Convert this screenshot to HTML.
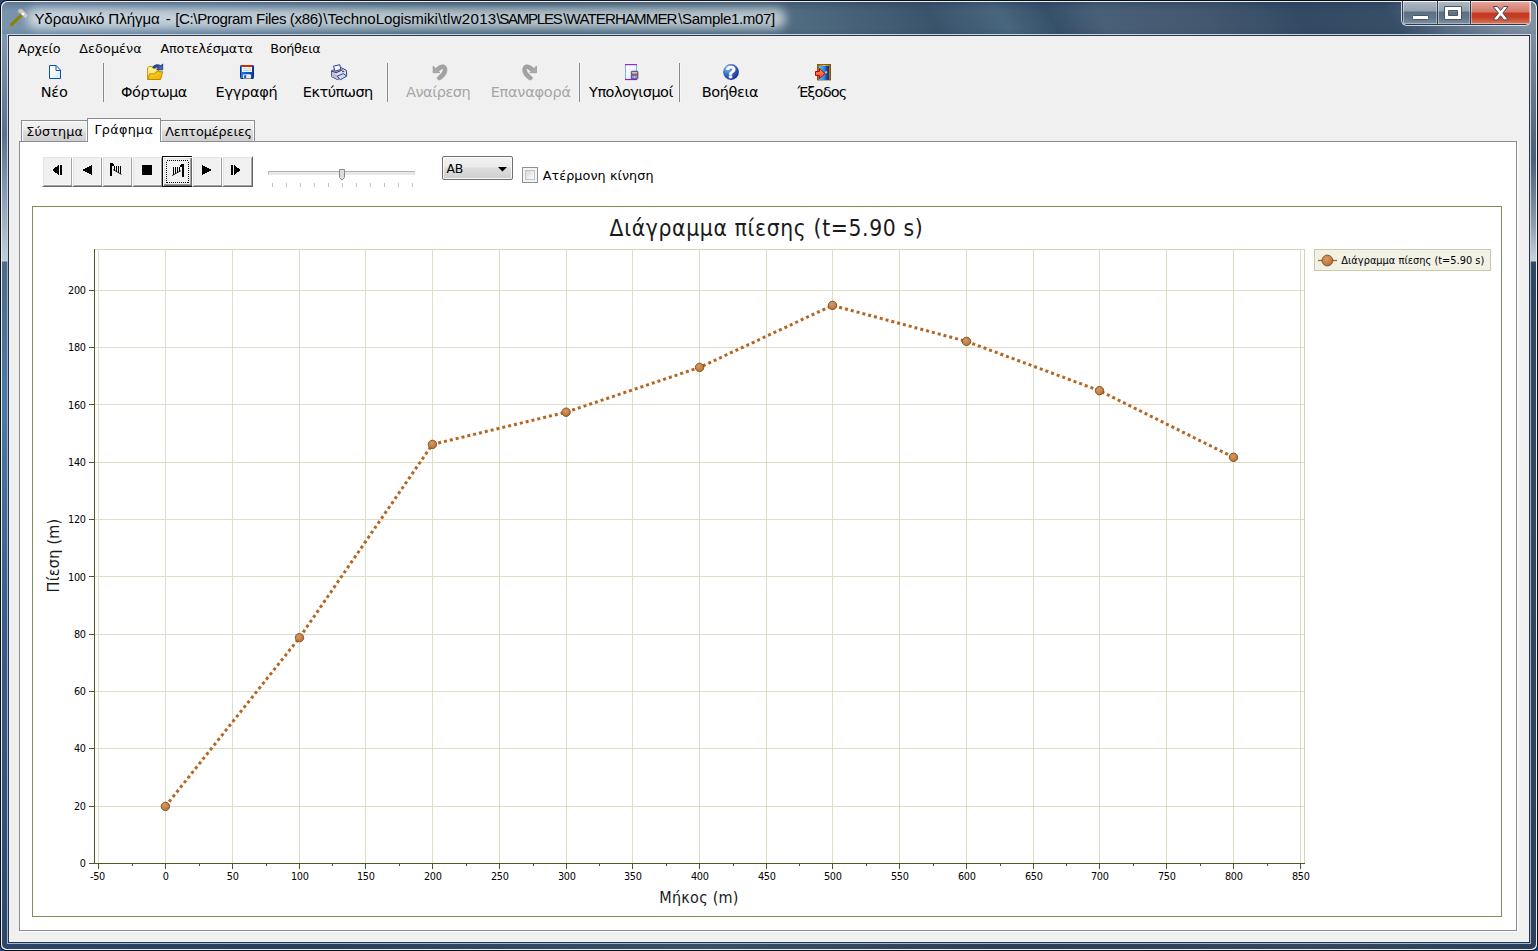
<!DOCTYPE html><html lang="el"><head><meta charset="utf-8"><title>Υδραυλικό Πλήγμα</title><style>
*{margin:0;padding:0;box-sizing:border-box}
html,body{width:1538px;height:951px;overflow:hidden}
body{position:relative;background:#1d4c80;font-family:"DejaVu Sans","Liberation Sans",sans-serif;color:#000}
.a{position:absolute}
.t{position:absolute;white-space:pre;line-height:normal}
#win{left:0;top:0;width:1538px;height:951px;border-radius:7px 7px 6px 6px;background:#0b0f14;overflow:hidden}
#winhi{left:1px;top:1px;width:1536px;height:949px;border-radius:6px 6px 5px 5px;background:#e9eef3;overflow:hidden}
#glassT{left:1px;top:1px;width:1534px;height:34px;border-radius:6px 6px 0 0;
 background:linear-gradient(60deg,#7a94ad 8.5px,#6f8ca6 95.1px,#5c7c96 225.0px,#486a80 354.9px,#44667b 484.8px,#4b6a80 614.7px,#4f6b80 701.3px,#3a546c 813.9px,#48667e 874.5px,#36506a 917.8px,#4a6078 961.1px,#44586f 1047.7px,#344a64 1134.3px,#384e67 1212.2px,#5a6e84 1255.5px,#76889b 1298.8px,#8494a5 1336.9px)}
#glassTs{left:1px;top:1px;width:1534px;height:34px;border-radius:6px 6px 0 0;background:linear-gradient(to bottom,rgba(20,40,70,.28) 0,rgba(20,40,70,.12) 4px,rgba(0,0,0,0) 9px,rgba(0,0,0,0) 26px,rgba(20,40,70,.10) 33px)}
#glassL{left:1px;top:33px;width:6px;height:915px;border-radius:0 0 0 5px;
 background:linear-gradient(to bottom,#8199b0 0,#56728e 100px,#8fa5b8 170px,#c3cfd9 227px,#4c6c8c 228px,#4a7aa5 370px,#3a5f8a 570px,#2c4a72 880px,#2c4468 915px)}
#glassR{left:1529px;top:33px;width:6px;height:915px;border-radius:0 0 5px 0;
 background:linear-gradient(to bottom,#7d8fa0 0,#4a5f78 125px,#8b9cad 190px,#c8d4de 227px,#2f4863 228px,#34495f 500px,#2b405c 915px)}
#glassB{left:6px;top:943px;width:1524px;height:5px;background:linear-gradient(to right,#2c4468 0,#2a3f5a 300px,#3a4f68 700px,#2b3f58 1000px,#33485f 1300px,#2b405c 1524px)}
#glow{left:27px;top:8px;width:759px;height:21px;border-radius:10px;background:rgba(255,255,255,.62);filter:blur(5px)}
#title{left:33.7px;top:10.5px;font-family:"Liberation Sans","DejaVu Sans",sans-serif;font-size:14.57px;color:#000}
#inL{left:7px;top:34px;width:1524px;height:910px;background:linear-gradient(to bottom,#ccd6e0 0,#c4d0dc 227px,#9fb3c8 228px,#a0b4cc 100%)}
#inD{left:8px;top:35px;width:1522px;height:908px;background:#25364a}
#client{left:9px;top:36px;width:1520px;height:906px;background:#f0f0f0;overflow:hidden}
/* caption buttons */
#cap{left:1401px;top:1px;width:130px;height:25px;border-radius:0 0 6px 6px;background:rgba(255,255,255,.75)}
#capd{left:1px;top:0;width:128px;height:24px;border-radius:0 0 5px 5px;background:#2b3a4c;overflow:hidden}
.cb{position:absolute;top:0;height:23px}
.cbg{background:linear-gradient(to bottom,#c3ccd5 0,#a9b5c1 2px,#93a1af 10px,#5d6f82 11px,#62758a 17px,#7f91a4 23px);box-shadow:inset 1px 0 0 rgba(255,255,255,.45),inset -1px 0 0 rgba(255,255,255,.35),inset 0 1px 0 rgba(255,255,255,.8),inset 0 -1px 0 rgba(255,255,255,.35)}
.cbr{background:linear-gradient(to bottom,#eab4a9 0,#e2a094 2px,#d4766a 11px,#c63a21 12px,#c53c22 16px,#cf6a4c 21px,#d58a6e 23px);box-shadow:inset 1px 0 0 rgba(255,255,255,.4),inset -1px 0 0 rgba(255,255,255,.4),inset 0 1px 0 rgba(255,255,255,.85),inset 0 -1px 0 rgba(255,255,255,.35)}
/* menu/toolbar */
.dis{color:#a5a5a5}
.sep{position:absolute;top:27px;width:1px;height:39px;background:#868686;box-shadow:-1px 0 0 #f7f7f7,1px 0 0 #f7f7f7}
/* tabs */
.tab{position:absolute;border:1px solid #898c95;border-bottom:none;background:linear-gradient(to bottom,#f2f2f2 0,#ebebeb 9px,#dddddd 10px,#cfcfcf 100%);box-shadow:inset 1px 1px 0 #fcfcfc,inset -1px 0 0 #fcfcfc}
.tabs{position:absolute;border:1px solid #898c95;border-bottom:none;background:#fff}
#tabpage{left:10px;top:105px;width:1498px;height:790px;border:1px solid #898c95;background:#fff;box-shadow:1px 1px 0 #fdfdfd,2px 1px 0 #f7f7f7}
/* buttons */
.btn{position:absolute;top:120px;width:31px;height:31px;background:#f0f0f0;border:1px solid;border-color:#fff #696969 #696969 #fff;box-shadow:inset 1px 1px 0 #e3e3e3,inset -1px -1px 0 #a0a0a0,inset -2px -2px 0 #f8f8f8}
.btnf{position:absolute;top:120px;width:31px;height:31px;background:#f0f0f0;border:1px solid #100808;box-shadow:inset 1px 1px 0 #fff,inset -1px -1px 0 #696969,inset -2px -2px 0 #a0a0a0,inset 2px 2px 0 #e3e3e3}
.btn svg,.btnf svg{position:absolute;left:-1px;top:-1px}
</style></head><body>
<div id="win" class="a"><div id="winhi" class="a">
<div id="glassT" class="a"></div><div id="glassTs" class="a"></div><div id="glassL" class="a"></div><div id="glassR" class="a"></div><div id="glassB" class="a"></div>
</div>
<div id="glow" class="a"></div>
<svg class="a" style="left:6px;top:6px" width="26" height="24" viewBox="6 6 26 24"><path d="M10.5 25.5 L21.5 15.2" stroke="#8a8400" stroke-width="3.1" stroke-linecap="butt"/><path d="M18 10.2 C19.5 8.6 21.6 8.6 23 10 L28.6 15.6 L25.6 18.7 L21.4 14.6 C20.6 13.6 19.4 12.6 18.2 12.4 Z" fill="#c9c9c9" stroke="#a4a4a4" stroke-width=".9"/><circle cx="23" cy="14" r="1.3" fill="#fff"/></svg>
<span class="t " style="left:34.40px;top:9.78px;font-size:15.1px;font-family:'Liberation Sans','DejaVu Sans',sans-serif;letter-spacing:-0.091px;">Υδραυλικό Πλήγμα</span>
<span class="t " style="left:165.80px;top:9.78px;font-size:15.1px;font-family:'Liberation Sans','DejaVu Sans',sans-serif;letter-spacing:0.000px;">-</span>
<span class="t " style="left:175.20px;top:9.78px;font-size:15.1px;font-family:'Liberation Sans','DejaVu Sans',sans-serif;letter-spacing:-0.385px;">[C:\Program Files (x86)</span>
<span class="t " style="left:323.30px;top:9.78px;font-size:15.1px;font-family:'Liberation Sans','DejaVu Sans',sans-serif;letter-spacing:-0.075px;">\TechnoLogismiki</span>
<span class="t " style="left:438.20px;top:9.78px;font-size:15.1px;font-family:'Liberation Sans','DejaVu Sans',sans-serif;letter-spacing:0.254px;">\tlw2013</span>
<span class="t " style="left:496.40px;top:9.78px;font-size:15.1px;font-family:'Liberation Sans','DejaVu Sans',sans-serif;letter-spacing:-1.304px;">\SAMPLES</span>
<span class="t " style="left:563.30px;top:9.78px;font-size:15.1px;font-family:'Liberation Sans','DejaVu Sans',sans-serif;letter-spacing:-0.900px;">\WATERHAMMER</span>
<span class="t " style="left:678.20px;top:9.78px;font-size:15.1px;font-family:'Liberation Sans','DejaVu Sans',sans-serif;letter-spacing:-0.368px;">\Sample1.m07]</span>
<div id="cap" class="a"><div id="capd" class="a">
<div class="cb cbg" style="left:1px;width:34px"></div><div class="cb cbg" style="left:36px;width:32px"></div><div class="cb cbr" style="left:69px;width:59px"></div>
</div></div>
<svg class="a" style="left:1401px;top:0" width="130" height="26" viewBox="1401 0 130 26"><rect x="1412.5" y="15.5" width="16" height="4" rx=".8" fill="#fff" stroke="#4a5566" stroke-width="1"/><path d="M1444.5 6.5h17v13h-17z M1448.5 10.5v5h9v-5z" fill="#fff" fill-rule="evenodd" stroke="#4a5566" stroke-width="1"/><path d="M1493.2 6.5h4.3l3.1 4 3.1-4h4.3l-5.2 6.6 5.4 6.8h-4.4l-3.2-4.2-3.2 4.2h-4.4l5.4-6.8z" fill="#fff" stroke="#4a4a5a" stroke-width="1" stroke-linejoin="round"/></svg>
<div id="inL" class="a"></div><div id="inD" class="a"></div>
<div id="client" class="a">
<span class="t " style="left:9.10px;top:5.17px;font-size:12.75px;font-family:'DejaVu Sans','Liberation Sans',sans-serif;letter-spacing:-0.157px;">Αρχείο</span>
<span class="t " style="left:70.30px;top:5.17px;font-size:12.75px;font-family:'DejaVu Sans','Liberation Sans',sans-serif;letter-spacing:0.094px;">Δεδομένα</span>
<span class="t " style="left:151.40px;top:5.17px;font-size:12.75px;font-family:'DejaVu Sans','Liberation Sans',sans-serif;letter-spacing:-0.116px;">Αποτελέσματα</span>
<span class="t " style="left:261.20px;top:5.17px;font-size:12.75px;font-family:'DejaVu Sans','Liberation Sans',sans-serif;letter-spacing:-0.273px;">Βοήθεια</span>
<div class="sep" style="left:94px"></div>
<div class="sep" style="left:378px"></div>
<div class="sep" style="left:570px"></div>
<div class="sep" style="left:670px"></div>
<span class="t " style="left:31.70px;top:48.14px;font-size:14.5px;font-family:'DejaVu Sans','Liberation Sans',sans-serif;letter-spacing:-0.242px;">Νέο</span>
<span class="t " style="left:112.10px;top:48.14px;font-size:14.5px;font-family:'DejaVu Sans','Liberation Sans',sans-serif;letter-spacing:-0.481px;">Φόρτωμα</span>
<span class="t " style="left:206.60px;top:48.14px;font-size:14.5px;font-family:'DejaVu Sans','Liberation Sans',sans-serif;letter-spacing:-0.292px;">Εγγραφή</span>
<span class="t " style="left:293.80px;top:48.14px;font-size:14.5px;font-family:'DejaVu Sans','Liberation Sans',sans-serif;letter-spacing:-0.513px;">Εκτύπωση</span>
<span class="t dis" style="left:397.00px;top:48.14px;font-size:14.5px;font-family:'DejaVu Sans','Liberation Sans',sans-serif;letter-spacing:-0.459px;">Αναίρεση</span>
<span class="t dis" style="left:481.70px;top:48.14px;font-size:14.5px;font-family:'DejaVu Sans','Liberation Sans',sans-serif;letter-spacing:-0.256px;">Επαναφορά</span>
<span class="t " style="left:580.10px;top:48.14px;font-size:14.5px;font-family:'DejaVu Sans','Liberation Sans',sans-serif;letter-spacing:-0.538px;">Υπολογισμοί</span>
<span class="t " style="left:692.80px;top:48.14px;font-size:14.5px;font-family:'DejaVu Sans','Liberation Sans',sans-serif;letter-spacing:-0.404px;">Βοήθεια</span>
<span class="t " style="left:788.40px;top:48.14px;font-size:14.5px;font-family:'DejaVu Sans','Liberation Sans',sans-serif;letter-spacing:-0.844px;">Έξοδος</span>
<svg class="a" style="left:0;top:24px" width="900" height="26" viewBox="9 60 900 26"><defs><linearGradient id="gDoc" x1="0" y1="0" x2="1" y2="1"><stop offset="0" stop-color="#ffffff"/><stop offset=".5" stop-color="#f4f9fe"/><stop offset="1" stop-color="#cfe6f8"/></linearGradient><linearGradient id="gFl" x1="0" y1="0" x2="1" y2="0"><stop offset="0" stop-color="#1a8cf0"/><stop offset=".45" stop-color="#0a5cd0"/><stop offset="1" stop-color="#0a3ca0"/></linearGradient><linearGradient id="gFo" x1="0" y1="0" x2="1" y2="1"><stop offset="0" stop-color="#ffd814"/><stop offset="1" stop-color="#e8ae0c"/></linearGradient><linearGradient id="gFb" x1="0" y1="0" x2="0" y2="1"><stop offset="0" stop-color="#fdf6a8"/><stop offset="1" stop-color="#f3d95a"/></linearGradient><radialGradient id="gHelp" cx=".3" cy=".25" r=".9"><stop offset="0" stop-color="#8db8ea"/><stop offset=".45" stop-color="#3a6cc6"/><stop offset="1" stop-color="#0a2384"/></radialGradient><linearGradient id="gDoor" x1="0" y1="0" x2="1" y2="0"><stop offset="0" stop-color="#5ec4fa"/><stop offset=".55" stop-color="#1c8ae6"/><stop offset=".8" stop-color="#2a3a9a"/><stop offset="1" stop-color="#26287a"/></linearGradient><linearGradient id="gFrame" x1="0" y1="0" x2="1" y2="0"><stop offset="0" stop-color="#8a6414"/><stop offset=".5" stop-color="#d8ba58"/><stop offset="1" stop-color="#8a6414"/></linearGradient><linearGradient id="gArr" x1="0" y1="0" x2="0" y2="1"><stop offset="0" stop-color="#ff8a60"/><stop offset="1" stop-color="#ff4a20"/></linearGradient><linearGradient id="gAr2" x1="0" y1="0" x2="1" y2="1"><stop offset="0" stop-color="#2a3a84"/><stop offset=".55" stop-color="#3558b0"/><stop offset="1" stop-color="#2f8ee8"/></linearGradient><linearGradient id="gPg" x1="0" y1="0" x2="1" y2="1"><stop offset="0" stop-color="#ffffff"/><stop offset="1" stop-color="#dfeafb"/></linearGradient></defs><path d="M49.5 65.5h6.6l4.4 4.6v8.4h-11z" fill="url(#gDoc)" stroke="#0a52b6" stroke-width="1" stroke-linejoin="round"/><path d="M56 65.7v4.8h4.4" fill="none" stroke="#0a52b6" stroke-width="1"/><path d="M147.6 79.4v-11.4l1.2-1.4h3.6l1.4 1.6h4.8v11.2z" fill="url(#gFb)" stroke="#c69400" stroke-width="1" stroke-linejoin="round"/><path d="M147.7 79.5l1.9-5.6h4.9l1.7-2.2h6.5l-2.2 7.8z" fill="url(#gFo)" stroke="#c08a00" stroke-width="1" stroke-linejoin="round"/><path d="M152.6 67.4c1.4-2.6 5.2-3.6 8.2-1.6l1.9-1.9v5.9h-5.9l1.9-1.9c-1.6-1.2-3.6-.9-4.7.3z" fill="url(#gAr2)" stroke="#26357c" stroke-width=".9" stroke-linejoin="round"/><rect x="240.5" y="65.5" width="13" height="13" rx=".8" fill="url(#gFl)" stroke="#1c2670" stroke-width="1"/><rect x="242" y="65" width="10" height="7" fill="#f6fbff"/><rect x="242" y="65" width="10" height="2" fill="#d42a0c"/><rect x="243" y="68.5" width="8" height=".8" fill="#b8c4cc"/><rect x="243" y="70.3" width="8" height=".8" fill="#b8c4cc"/><rect x="243" y="74.2" width="8" height="4.6" rx="1" fill="#ece8e2"/><rect x="244.2" y="75.2" width="1.9" height="3.4" fill="#0a50c8"/><rect x="243" y="78.2" width="8" height=".8" fill="#8a8a80"/><path d="M331.6 70.6l9.4-3 5.2 2.6.6 5-9.4 4.4-5.8-3z" fill="#e4e0f0" stroke="#3a3f82" stroke-width="1" stroke-linejoin="round"/><path d="M331.8 72.4l5.7 2.6v4.2l-5.7-2.9z" fill="#bdb9d8"/><path d="M333.4 66.2l6.3-1.5 1.2 4.6-5.8 1.9z" fill="#eef7fe" stroke="#3a3f82" stroke-width="1" stroke-linejoin="round"/><path d="M332 71.2l4.2 1.4 6.4-2.8" fill="none" stroke="#3a3f82" stroke-width="1.2"/><path d="M337.2 76.2l6-2.6 3.6 2.4-6.4 3.8z" fill="#c2e2f6" stroke="#3a3f82" stroke-width="1" stroke-linejoin="round"/><ellipse cx="343.2" cy="71.5" rx="1.2" ry=".8" fill="#0a7a12"/><path d="M435.8 68.4C437.5 66.2 440.5 64.7 443.2 64.8C445.6 64.9 447 67.2 447 70.1C447 73.5 444.6 77 440.7 79.6C439.6 80.3 438 80.1 437.2 78.6C436.8 77.8 437.4 77 438.4 76.3C440.6 74.6 442.6 72.2 443.2 69.8C443.4 68.8 442.6 68.6 441.8 68.9C440.8 69.3 439.8 70.2 439.2 71.1Z" fill="#a2a2a2" stroke="#979797" stroke-width=".5"/><path d="M433.1 66v6.7h6.8z" fill="#ababab" stroke="#939393" stroke-width=".7" stroke-linejoin="round"/><g transform="translate(969.6 0) scale(-1 1)"><path d="M435.8 68.4C437.5 66.2 440.5 64.7 443.2 64.8C445.6 64.9 447 67.2 447 70.1C447 73.5 444.6 77 440.7 79.6C439.6 80.3 438 80.1 437.2 78.6C436.8 77.8 437.4 77 438.4 76.3C440.6 74.6 442.6 72.2 443.2 69.8C443.4 68.8 442.6 68.6 441.8 68.9C440.8 69.3 439.8 70.2 439.2 71.1Z" fill="#a2a2a2" stroke="#979797" stroke-width=".5"/><path d="M433.1 66v6.7h6.8z" fill="#ababab" stroke="#939393" stroke-width=".7" stroke-linejoin="round"/></g><rect x="625.5" y="64.5" width="11" height="15" fill="url(#gPg)" stroke="#7eb0de" stroke-width="1"/><rect x="625" y="64" width="12" height="1.2" fill="#8a2ce0"/><rect x="625" y="78.9" width="12" height="1.2" fill="#961cc8"/><rect x="631.3" y="71.3" width="6.6" height="7.6" rx=".6" fill="#7c7cae" stroke="#45457e" stroke-width=".9"/><rect x="632.2" y="72.2" width="4.8" height="1.2" fill="#efe46a"/><rect x="635.2" y="73.8" width="1.9" height="1.9" fill="#d24848"/><rect x="632.4" y="74" width="2" height="1.4" fill="#4a5ab0"/><rect x="632.4" y="76" width="1.2" height="2.2" fill="#a8a8d0"/><rect x="634.2" y="76" width="1.2" height="2.2" fill="#c8c8e4"/><rect x="636" y="76" width="1.2" height="2.2" fill="#9090c4"/><circle cx="731" cy="72" r="7.9" fill="url(#gHelp)"/><text x="730.9" y="77.7" text-anchor="middle" font-family='"Liberation Sans","DejaVu Sans",sans-serif' font-weight="bold" font-size="16.5" fill="#fff" stroke="#fff" stroke-width=".7" stroke-linejoin="round">?</text><rect x="817" y="64" width="14" height="16" fill="url(#gFrame)"/><rect x="817.4" y="64.4" width="13.2" height="15.6" fill="none" stroke="#7a5410" stroke-width=".8"/><rect x="819" y="66" width="10" height="14" fill="url(#gDoor)"/><rect x="825.2" y="71.4" width="1.9" height="1.9" fill="#ffe000"/><path d="M815.5 71.5h4v-3.1l5.4 5.1-5.4 5.2v-3.2h-4z" fill="url(#gArr)" stroke="#c40000" stroke-width="1" stroke-linejoin="miter"/></svg>
<div id="tabpage" class="a"></div>
<div class="tab" style="left:12px;top:84px;width:67px;height:21px"></div>
<div class="tab" style="left:151px;top:84px;width:95px;height:21px"></div>
<div class="tabs" style="left:78px;top:82px;width:74px;height:24px"></div>
<span class="t " style="left:17.30px;top:87.87px;font-size:12.75px;font-family:'DejaVu Sans','Liberation Sans',sans-serif;letter-spacing:0.120px;">Σύστημα</span>
<span class="t " style="left:85.40px;top:85.87px;font-size:12.75px;font-family:'DejaVu Sans','Liberation Sans',sans-serif;letter-spacing:0.316px;">Γράφημα</span>
<span class="t " style="left:156.20px;top:87.87px;font-size:12.75px;font-family:'DejaVu Sans','Liberation Sans',sans-serif;letter-spacing:-0.060px;">Λεπτομέρειες</span>
<div class="btn" style="left:33px"></div><div class="btn" style="left:63px"></div><div class="btn" style="left:93px"></div><div class="btn" style="left:123px"></div><div class="btnf" style="left:153px"></div><div class="btn" style="left:183px"></div><div class="btn" style="left:213px"></div><svg class="a" style="left:31px;top:118px" width="216" height="36" viewBox="40 154 216 36" shape-rendering="crispEdges"><path d="M52 170l7-5v10z" fill="#000"/><rect x="60" y="165" width="2" height="10" fill="#000"/><path d="M82 170l10-5v10z" fill="#000"/><rect x="110" y="163" width="2" height="13" fill="#000"/><path d="M112 163l2 2v1h-2z" fill="#000"/><rect x="114" y="166" width="1" height="5" fill="#000"/><rect x="116" y="166" width="1" height="6" fill="#000"/><rect x="118" y="166" width="1" height="7" fill="#000"/><rect x="120" y="166" width="1" height="8" fill="#000"/><path d="M113 169.5l8.5 5" stroke="#000" stroke-width=".8" shape-rendering="auto"/><rect x="142" y="165" width="10" height="10" fill="#000"/><rect x="182" y="164" width="2" height="13" fill="#000"/><path d="M182 164l-2.4 2.4v1h2.4z" fill="#000"/><rect x="173" y="167" width="1" height="8" fill="#000"/><rect x="175" y="167" width="1" height="7" fill="#000"/><rect x="177" y="167" width="1" height="6" fill="#000"/><rect x="179" y="167" width="1" height="5" fill="#000"/><path d="M172 175.6l9-5" stroke="#000" stroke-width=".8" shape-rendering="auto"/><path d="M167 160h1M167 182h1M169 160h1M169 182h1M171 160h1M171 182h1M173 160h1M173 182h1M175 160h1M175 182h1M177 160h1M177 182h1M179 160h1M179 182h1M181 160h1M181 182h1M183 160h1M183 182h1M185 160h1M185 182h1M187 160h1M187 182h1M166 161v1M188 161v1M166 163v1M188 163v1M166 165v1M188 165v1M166 167v1M188 167v1M166 169v1M188 169v1M166 171v1M188 171v1M166 173v1M188 173v1M166 175v1M188 175v1M166 177v1M188 177v1M166 179v1M188 179v1M166 181v1M188 181v1" stroke="#000" stroke-width="1" fill="none" transform="translate(0 .5)"/><path d="M212 170l-10-5v10z" fill="#000"/><rect x="231" y="165" width="2" height="10" fill="#000"/><path d="M241 170l-7-5v10z" fill="#000"/></svg><div class="a" style="left:259px;top:135px;width:147px;height:4px;background:#e7eaea;border-top:1px solid #b0b0b0;border-left:1px solid #c4c4c4;border-right:1px solid #e0e0e0"></div><svg class="a" style="left:328px;top:131px" width="10" height="15" viewBox="337 167 10 15"><path d="M339.5 169.5h5v8l-2.5 2.6-2.5-2.6z" fill="#dcdcdc" stroke="#8c8c8c" stroke-width="1" stroke-linejoin="round"/></svg><div class="a" style="left:263px;top:147px;width:1px;height:4px;background:#c4c4c4"></div><div class="a" style="left:277px;top:147px;width:1px;height:4px;background:#c4c4c4"></div><div class="a" style="left:291px;top:147px;width:1px;height:4px;background:#c4c4c4"></div><div class="a" style="left:305px;top:147px;width:1px;height:4px;background:#c4c4c4"></div><div class="a" style="left:319px;top:147px;width:1px;height:4px;background:#c4c4c4"></div><div class="a" style="left:333px;top:147px;width:1px;height:4px;background:#c4c4c4"></div><div class="a" style="left:347px;top:147px;width:1px;height:4px;background:#c4c4c4"></div><div class="a" style="left:361px;top:147px;width:1px;height:4px;background:#c4c4c4"></div><div class="a" style="left:375px;top:147px;width:1px;height:4px;background:#c4c4c4"></div><div class="a" style="left:389px;top:147px;width:1px;height:4px;background:#c4c4c4"></div><div class="a" style="left:403px;top:147px;width:1px;height:4px;background:#c4c4c4"></div><div class="a" style="left:433px;top:120px;width:71px;height:24px;border:1px solid #707070;border-radius:2px;background:linear-gradient(to bottom,#f2f2f2 0,#ebebeb 45%,#dddddd 50%,#cfcfcf 100%);box-shadow:inset 0 0 0 1px rgba(255,255,255,.8)"></div><span class="t " style="left:437.40px;top:125.19px;font-size:12.4px;font-family:'DejaVu Sans','Liberation Sans',sans-serif;letter-spacing:-0.076px;">AB</span><svg class="a" style="left:488px;top:130px" width="12" height="7" viewBox="497 166 12 7"><path d="M498 167h9l-4.5 4.6z" fill="#000"/></svg><div class="a" style="left:513px;top:131px;width:16px;height:16px;border:1px solid #8e8f8f;background:#f4f4f4;box-shadow:inset 0 0 0 1px #f4f4f4"><div class="a" style="left:2px;top:2px;width:10px;height:10px;border:1px solid #c0c6cc;background:linear-gradient(135deg,#d2d7dc 0,#e9ecee 50%,#fafafa 100%)"></div></div><span class="t " style="left:533.70px;top:132.17px;font-size:12.75px;font-family:'DejaVu Sans','Liberation Sans',sans-serif;letter-spacing:0.074px;">Ατέρμονη κίνηση</span>
<svg class="a" style="left:21px;top:168px" width="1476" height="716" viewBox="30 204 1476 716" font-family='"DejaVu Sans Condensed","Liberation Sans",sans-serif'><defs><radialGradient id="gMk" cx=".4" cy=".35" r=".75"><stop offset="0" stop-color="#d79c64"/><stop offset=".6" stop-color="#c27f45"/><stop offset="1" stop-color="#aa682f"/></radialGradient></defs><rect x="32.5" y="206.5" width="1469" height="710" fill="#fff" stroke="#7f8f5a" stroke-width="1"/><path d="M98.5 250V863M165.5 250V863M232.5 250V863M299.5 250V863M365.5 250V863M432.5 250V863M499.5 250V863M566.5 250V863M632.5 250V863M699.5 250V863M766.5 250V863M832.5 250V863M899.5 250V863M966.5 250V863M1033.5 250V863M1099.5 250V863M1166.5 250V863M1233.5 250V863M1300.5 250V863M95 806.5H1304M95 748.5H1304M95 691.5H1304M95 634.5H1304M95 576.5H1304M95 519.5H1304M95 462.5H1304M95 404.5H1304M95 347.5H1304M95 290.5H1304" stroke="#dcdec8" stroke-width="1" fill="none" shape-rendering="crispEdges"/><path d="M95 249.5H1304.5V863" stroke="#d2d4b8" stroke-width="1" fill="none" shape-rendering="crispEdges"/><path d="M94.5 249V864M94 863.5H1305M89 863.5H94M89 806.5H94M89 748.5H94M89 691.5H94M89 634.5H94M89 576.5H94M89 519.5H94M89 462.5H94M89 404.5H94M89 347.5H94M89 290.5H94M98.5 863V869M165.5 863V869M232.5 863V869M299.5 863V869M365.5 863V869M432.5 863V869M499.5 863V869M566.5 863V869M632.5 863V869M699.5 863V869M766.5 863V869M832.5 863V869M899.5 863V869M966.5 863V869M1033.5 863V869M1099.5 863V869M1166.5 863V869M1233.5 863V869M1300.5 863V869M132.5 863V866M199.5 863V866M266.5 863V866M332.5 863V866M399.5 863V866M466.5 863V866M533.5 863V866M599.5 863V866M666.5 863V866M733.5 863V866M799.5 863V866M866.5 863V866M933.5 863V866M1000.5 863V866M1066.5 863V866M1133.5 863V866M1200.5 863V866M1267.5 863V866" stroke="#4b5a28" stroke-width="1" fill="none" shape-rendering="crispEdges"/><g font-size="10.8" letter-spacing="-.3" fill="#000"><text x="85.7" y="867.0" text-anchor="end">0</text><text x="85.7" y="809.7" text-anchor="end">20</text><text x="85.7" y="752.4" text-anchor="end">40</text><text x="85.7" y="695.1" text-anchor="end">60</text><text x="85.7" y="637.8" text-anchor="end">80</text><text x="85.7" y="580.5" text-anchor="end">100</text><text x="85.7" y="523.2" text-anchor="end">120</text><text x="85.7" y="465.9" text-anchor="end">140</text><text x="85.7" y="408.6" text-anchor="end">160</text><text x="85.7" y="351.3" text-anchor="end">180</text><text x="85.7" y="294.0" text-anchor="end">200</text><text x="97.5" y="880.2" text-anchor="middle">-50</text><text x="165.7" y="880.2" text-anchor="middle">0</text><text x="232.7" y="880.2" text-anchor="middle">50</text><text x="299.7" y="880.2" text-anchor="middle">100</text><text x="365.7" y="880.2" text-anchor="middle">150</text><text x="432.7" y="880.2" text-anchor="middle">200</text><text x="499.7" y="880.2" text-anchor="middle">250</text><text x="566.7" y="880.2" text-anchor="middle">300</text><text x="632.7" y="880.2" text-anchor="middle">350</text><text x="699.7" y="880.2" text-anchor="middle">400</text><text x="766.7" y="880.2" text-anchor="middle">450</text><text x="832.7" y="880.2" text-anchor="middle">500</text><text x="899.7" y="880.2" text-anchor="middle">550</text><text x="966.7" y="880.2" text-anchor="middle">600</text><text x="1033.7" y="880.2" text-anchor="middle">650</text><text x="1099.7" y="880.2" text-anchor="middle">700</text><text x="1166.7" y="880.2" text-anchor="middle">750</text><text x="1233.7" y="880.2" text-anchor="middle">800</text><text x="1300.7" y="880.2" text-anchor="middle">850</text></g><text x="766.5" y="236.1" text-anchor="middle" font-size="22.7" letter-spacing=".63" fill="#1a1a1a">Διάγραμμα πίεσης (t=5.90 s)</text><text x="699" y="903.4" text-anchor="middle" font-size="16" letter-spacing=".25" fill="#1a1a1a">Μήκος (m)</text><text transform="translate(58.9 555.5) rotate(-90)" text-anchor="middle" font-size="16" letter-spacing=".25" fill="#1a1a1a">Πίεση (m)</text><rect x="1314.5" y="249.5" width="176" height="21" fill="#f1f1e6" stroke="#c9cba8" stroke-width="1"/><path d="M1318 260.5H1337" stroke="#b5651d" stroke-width="1.4"/><circle cx="1327.4" cy="260.5" r="5.4" fill="url(#gMk)" stroke="#8a5526" stroke-width="1"/><text x="1341.3" y="264" font-size="10.9" letter-spacing=".02" fill="#000">Διάγραμμα πίεσης (t=5.90 s)</text><polyline points="165.4,806.4 299.5,637.7 432.4,444.4 566.1,412.2 699.6,367.4 832.5,305.4 966.5,341.4 1099.5,390.7 1233.5,457.3" fill="none" stroke="#b56522" stroke-width="3" stroke-dasharray="3 3" stroke-linejoin="round"/><circle cx="165.4" cy="806.4" r="4.2" fill="url(#gMk)" stroke="#8a5526" stroke-width="1"/><circle cx="299.5" cy="637.7" r="4.2" fill="url(#gMk)" stroke="#8a5526" stroke-width="1"/><circle cx="432.4" cy="444.4" r="4.2" fill="url(#gMk)" stroke="#8a5526" stroke-width="1"/><circle cx="566.1" cy="412.2" r="4.2" fill="url(#gMk)" stroke="#8a5526" stroke-width="1"/><circle cx="699.6" cy="367.4" r="4.2" fill="url(#gMk)" stroke="#8a5526" stroke-width="1"/><circle cx="832.5" cy="305.4" r="4.2" fill="url(#gMk)" stroke="#8a5526" stroke-width="1"/><circle cx="966.5" cy="341.4" r="4.2" fill="url(#gMk)" stroke="#8a5526" stroke-width="1"/><circle cx="1099.5" cy="390.7" r="4.2" fill="url(#gMk)" stroke="#8a5526" stroke-width="1"/><circle cx="1233.5" cy="457.3" r="4.2" fill="url(#gMk)" stroke="#8a5526" stroke-width="1"/></svg>
</div>
</div>
</body></html>
